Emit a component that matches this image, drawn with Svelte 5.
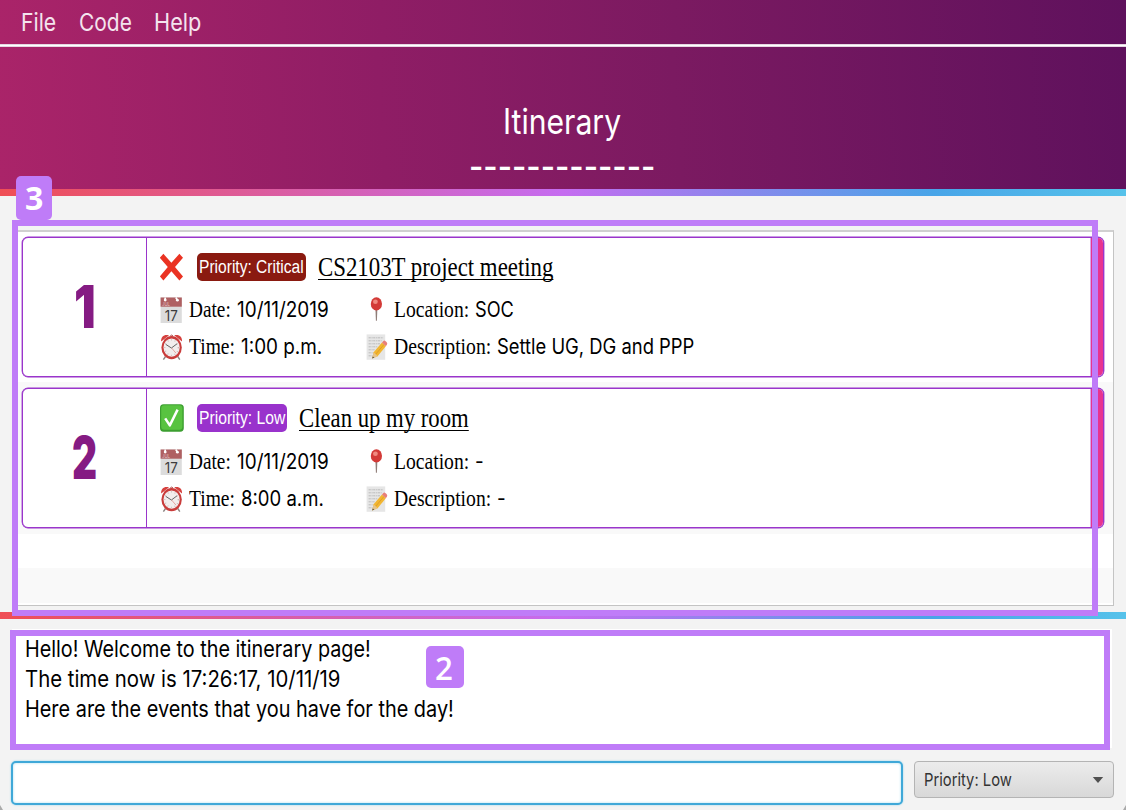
<script>
  const menus = [
    { text: 'File', width: 35.5, gap: 22.5 },
    { text: 'Code', width: 53, gap: 22.5 },
    { text: 'Help', width: 47, gap: 0 },
  ];

  const events = [
    {
      index: '1', indexWidth: 22, done: false,
      priority: 'Critical', priorityWidth: 104.5, level: 'critical',
      title: 'CS2103T project meeting', titleWidth: 235,
      date: '10/11/2019', dateWidth: 92,
      time: '1:00 p.m.', timeWidth: 81,
      location: 'SOC', locationWidth: 39,
      description: 'Settle UG, DG and PPP', descriptionWidth: 197,
    },
    {
      index: '2', indexWidth: 25, done: true,
      priority: 'Low', priorityWidth: 86, level: 'low',
      title: 'Clean up my room', titleWidth: 170,
      date: '10/11/2019', dateWidth: 92,
      time: '8:00 a.m.', timeWidth: 83,
      location: '-', locationWidth: 9,
      description: '-', descriptionWidth: 9,
    },
  ];

  const messages = [
    { text: 'Hello! Welcome to the itinerary page!', width: 345.5 },
    { text: 'The time now is 17:26:17, 10/11/19', width: 315 },
    { text: 'Here are the events that you have for the day!', width: 429 },
  ];

  // Condenses a run of text horizontally to the given width.
  function fit(node, width) {
    node.style.transform = `scaleX(${width / node.offsetWidth})`;
  }
</script>

{#snippet condensed(text, width)}
  <span class="fit" style="width: {width}px"><span class="run" use:fit={width}>{text}</span></span>
{/snippet}

{#snippet cross()}
  <svg class="icon" viewBox="0 0 24 28" width="24" height="28">
    <path d="M3.4 .8 L11.4 9.8 L19.4 .8 L23 4.8 L15 14 L23 23.4 L19.4 27.4 L11.4 18.2 L3.4 27.4 L-.2 23.4 L7.8 14 L-.2 4.8Z" fill="#ea3323" />
  </svg>
{/snippet}

{#snippet check()}
  <svg class="icon" viewBox="0 0 24 28" width="24" height="28">
    <rect x="0" y=".3" width="23.8" height="27.4" rx="3.6" fill="#3c9f30" />
    <rect x="1.2" y="1.2" width="21.2" height="24.6" rx="3" fill="#58c340" />
    <path d="M5.2 14.4 L9.8 21.4 L17.6 5.6" fill="none" stroke="#fff" stroke-width="2.5" stroke-linejoin="round" />
  </svg>
{/snippet}

{#snippet calendar()}
  <svg class="icon" viewBox="0 0 24 28" width="24" height="28">
    <rect x=".6" y="1.5" width="21.2" height="25.5" fill="#dcdcdc" />
    <rect x=".6" y="1.5" width="21.2" height="9.2" fill="#af6062" />
    <path d="M5.2 1.5 v3 M15.8 1.5 l1.8 3" stroke="#fff" stroke-width="1.6" />
    <circle cx="5.2" cy="4" r="1.4" fill="#fff" />
    <circle cx="17.4" cy="4.2" r="1.4" fill="#fff" />
    <text x="2" y="9.6" font-size="5" textLength="8" lengthAdjust="spacingAndGlyphs" fill="#e3c4c4">JUL</text>
    <text x="4.8" y="24.6" font-size="14" textLength="13" lengthAdjust="spacingAndGlyphs" fill="#3c3c3c">17</text>
  </svg>
{/snippet}

{#snippet clock()}
  <svg class="icon" viewBox="0 0 24 28" width="24" height="28">
    <path d="M5.5 23.5 L3.4 26.6 M17.8 23.5 L19.8 26.6" stroke="#8c8583" stroke-width="1.4" />
    <path d="M1.2 8.6 C.6 3.6 4.5 .8 9 2.3Z M22 8.6 C22.6 3.6 18.7 .8 14.2 2.3Z" fill="#d6413e" />
    <path d="M10.2 3 q1.4 -1.8 2.8 0" fill="none" stroke="#a44" stroke-width="1" />
    <ellipse cx="11.6" cy="14.6" rx="10.2" ry="11.6" fill="#c93c3b" />
    <ellipse cx="11.6" cy="14.6" rx="8.1" ry="9.2" fill="#f2eded" />
    <ellipse cx="11.6" cy="14.6" rx="6.7" ry="7.7" fill="none" stroke="#c4b2b0" stroke-width="1.2" stroke-dasharray=".8 2.9" />
    <path d="M5.8 11.4 L11.4 15 L17 10.8" fill="none" stroke="#555" stroke-width=".9" />
    <path d="M11.6 15 L16 20.2" stroke="#db7168" stroke-width=".6" />
  </svg>
{/snippet}

{#snippet pin()}
  <svg class="icon" viewBox="1 0 24 28" width="24" height="28">
    <path d="M11.4 12 h2 l-.5 12.8 h-1Z" fill="#8f7d78" />
    <ellipse cx="12.4" cy="7.9" rx="5.6" ry="6.6" fill="#d33a37" />
    <ellipse cx="11.4" cy="5.8" rx="2.4" ry="2.2" fill="#f08a80" />
  </svg>
{/snippet}

{#snippet memo()}
  <svg class="icon" viewBox="1.4 0 24 28" width="24" height="28">
    <rect x="3" y="1.4" width="18.6" height="25.4" fill="#e6e6e6" />
    <path d="M5 4.8 h14.5 M5 7.8 h13 M5 10.8 h12 M5 13.8 h9 M5 16.8 h6 M5 19.8 h4 M5 22.8 h4" stroke="#bbb" stroke-width="1" stroke-dasharray="2.2 .7 1.2 .5" />
    <path d="M10 19.2 L18.4 9.4 L22.2 13.2 L14 23.2 L8.6 25.4Z" fill="#f2b632" />
    <path d="M12 21.4 L20.4 11.4" stroke="#dd9c22" stroke-width=".9" />
    <path d="M18.4 9.4 L19.8 7.9 Q20.8 7 22 8.2 L23.3 9.6 Q24 10.6 23.3 11.8 L22.2 13.2Z" fill="#e87f78" />
    <path d="M10 19.2 L14 23.2 L8.6 25.4Z" fill="#e5c48c" />
    <path d="M9.2 23.4 L10.6 24.6 L8.6 25.4Z" fill="#444" />
  </svg>
{/snippet}

<div class="window">
  <nav class="menubar">
    {#each menus as m}
      <span style="margin-right: {m.gap}px">{@render condensed(m.text, m.width)}</span>
    {/each}
  </nav>

  <header>
    <h1>{@render condensed('Itinerary', 118)}</h1>
    <div class="dashes">{@render condensed('-------------', 186)}</div>
  </header>
  <div class="strip"></div>

  <main>
    <div class="list">
      {#each events as e}
        <div class="row">
          <article class="card">
            <div class="index">{@render condensed(e.index, e.indexWidth)}</div>
            <div class="body">
              <div class="headline">
                {#if e.done}{@render check()}{:else}{@render cross()}{/if}
                <span class="priority {e.level}">{@render condensed(`Priority: ${e.priority}`, e.priorityWidth)}</span>
                <span class="title">{@render condensed(e.title, e.titleWidth)}</span>
              </div>
              <div class="facts">
                <div class="fact">
                  {@render calendar()}
                  <p><b>{@render condensed('Date:', 42)}</b>{@render condensed(e.date, e.dateWidth)}</p>
                </div>
                <div class="fact">
                  {@render pin()}
                  <p><b>{@render condensed('Location:', 75)}</b>{@render condensed(e.location, e.locationWidth)}</p>
                </div>
                <div class="fact">
                  {@render clock()}
                  <p><b>{@render condensed('Time:', 46)}</b>{@render condensed(e.time, e.timeWidth)}</p>
                </div>
                <div class="fact">
                  {@render memo()}
                  <p><b>{@render condensed('Description:', 97)}</b>{@render condensed(e.description, e.descriptionWidth)}</p>
                </div>
              </div>
            </div>
            <div class="edge"></div>
          </article>
        </div>
      {/each}
      <div class="row empty"></div>
      <div class="row empty"></div>
    </div>
  </main>
  <div class="strip"></div>

  <section class="messages">
    {#each messages as m}
      <div>{@render condensed(m.text, m.width)}</div>
    {/each}
  </section>

  <footer>
    <div class="command"></div>
    <div class="select">
      {@render condensed('Priority: Low', 88)}
      <svg width="12" height="8" viewBox="0 0 12 8"><path d="M.8 1 h10.4 L6 7Z" fill="#505050" /></svg>
    </div>
  </footer>

  <div class="outline list-outline"></div>
  <div class="outline message-outline"></div>
  <div class="marker three">{@render condensed('3', 18.5)}</div>
  <div class="marker two">{@render condensed('2', 18)}</div>
  <i class="corner left"></i>
  <i class="corner right"></i>
</div>

<style>
  :global(body) { margin: 0; background: #fff; }
  .window {
    position: relative;
    box-sizing: border-box;
    width: 1126px;
    height: 810px;
    overflow: hidden;
    display: flex;
    flex-direction: column;
    background: #f3f3f3;
    font-family: Inter, sans-serif;
    color: #000;
  }
  .fit { display: inline-block; flex: none; white-space: nowrap; text-align: left; }
  .run { display: inline-block; transform-origin: 0 50%; }
  .icon { display: block; flex: none; }

  .menubar {
    flex: none;
    box-sizing: border-box;
    height: 47px;
    padding-left: 20.6px;
    display: flex;
    border-bottom: 3px double #e4d8e2;
    background: linear-gradient(86deg, #aa2469, #8f1d65 34%, #7b1a61 60%, #5f115d) 0 0 / 100% 44px no-repeat #fff;
    color: #f4e4ee;
    font-size: 24.5px;
    line-height: 44px;
  }
  header {
    flex: none;
    height: 142px;
    box-sizing: border-box;
    padding: 50px 2px 0 0;
    display: flex;
    flex-direction: column;
    align-items: center;
    background: linear-gradient(86deg, #aa2469, #8f1d65 34%, #7b1a61 60%, #5f115d);
    color: #fff;
  }
  h1 { margin: 0; font-size: 35px; font-weight: 400; line-height: 49px; }
  .dashes { margin-top: -1px; font-size: 35px; font-weight: 500; line-height: 42px; }
  .strip {
    flex: none;
    height: 6.5px;
    background: linear-gradient(90deg, #ef4e55, #c56cf0 50%, #48a5e8 83%, #56c2ea);
  }
  main { flex: none; height: 416.5px; box-sizing: border-box; padding: 34px 12px 0; }
  .list {
    height: 376px;
    box-sizing: border-box;
    border: 1px solid #c4c4c4;
    border-top-width: 2px;
    border-top-color: #d0d0d0;
    background: #fff;
  }
  .row { height: 151.5px; box-sizing: border-box; padding: 5px 9px 0; }
  .row:first-child { height: 150.5px; }
  .row:nth-child(2) { padding-top: 6px; }
  .row:nth-child(even) { background: #f9f9f9; }
  .row.empty { height: 34.5px; }
  .card {
    box-sizing: border-box;
    height: 140px;
    display: flex;
    overflow: hidden;
    border: 1px solid #9a35cb;
    box-shadow: 0 0 0 .4px #9a35cb;
    border-radius: 6px;
    background: #fff;
  }
  .index {
    flex: none;
    width: 123px;
    display: flex;
    align-items: center;
    justify-content: center;
    border-right: 1px solid #9a35cb;
    color: #851b83;
    font-size: 59px;
    font-weight: 900;
    line-height: 138px;
  }
  .body { flex: 1; padding: 15.3px 0 0 13px; }
  .edge { width: 12px; background: #e8338f; border-left: 1px solid #d8a6ea; }
  .headline { display: flex; align-items: center; height: 28px; }
  .priority {
    box-sizing: border-box;
    height: 28px;
    margin: 0 12px 0 13px;
    padding: 0 2px;
    border-radius: 5px;
    color: #fff;
    font-family: 'Liberation Sans', sans-serif;
    font-size: 18.8px;
    line-height: 28px;
  }
  .critical { background: #8a1a10; }
  .low { background: #9932cc; }
  .title {
    font-family: 'Liberation Serif', serif;
    font-size: 27px;
    line-height: 28px;
  }
  .title .run { text-decoration: underline; text-decoration-thickness: 1.3px; text-decoration-skip-ink: none; text-underline-offset: 2.5px; }
  .facts {
    display: grid;
    grid-template-columns: 205px auto;
    grid-auto-rows: 28px;
    row-gap: 9px;
    justify-content: start;
    margin-top: 15.4px;
  }
  .fact { display: flex; align-items: center; gap: 5px; }
  p { margin: 0; display: flex; align-items: baseline; gap: 6px; font-size: 21px; line-height: 28px; }
  b { font-family: 'Liberation Serif', serif; font-weight: 400; font-size: 22.5px; }

  .messages {
    flex: none;
    height: 119px;
    margin: 10px 14px 0 12px;
    box-sizing: border-box;
    padding: 5px 0 0 12.8px;
    background: #fff;
    font-size: 22.3px;
    line-height: 30px;
  }
  .messages div { height: 30px; }
  footer { display: flex; align-items: flex-start; gap: 11px; padding: 13.5px 12px 0 11px; }
  .command {
    box-sizing: border-box;
    width: 892px;
    height: 44px;
    border: 2px solid #3fa8d8;
    border-radius: 5px;
    background: #fff;
    box-shadow: 0 0 2px #8fd0ea, inset 0 0 2px 1px #d8f0f8;
  }
  .select {
    box-sizing: border-box;
    width: 200px;
    height: 37px;
    padding: 0 9px;
    display: flex;
    align-items: center;
    justify-content: space-between;
    border: 1px solid #b4b4b4;
    border-radius: 4px;
    background: linear-gradient(#ececec, #d8d8d8);
    color: #333;
    font-size: 17.8px;
  }

  .outline { position: absolute; box-sizing: border-box; border: 6px solid #bf7cf8; }
  .list-outline { left: 12px; top: 220px; width: 1086px; height: 396px; }
  .message-outline { left: 10px; top: 630px; width: 1100px; height: 120px; }
  .marker {
    position: absolute;
    border-radius: 5px;
    background: #bf7cf8;
    color: #fff;
    font-family: 'Open Sans', sans-serif;
    font-weight: 700;
    font-size: 33px;
    text-align: center;
  }
  .three { left: 16px; top: 176px; width: 36px; height: 44px; line-height: 44px; }
  .two { left: 426px; top: 646px; width: 36px; padding-right: 2px; height: 42px; line-height: 43px; font-weight: 600; }
  .corner { position: absolute; bottom: 0; width: 3px; height: 5px; background: #aaa; }
  .left { left: 0; clip-path: polygon(0 0, 100% 100%, 0 100%); }
  .right { right: 0; clip-path: polygon(100% 0, 100% 100%, 0 100%); }
</style>
